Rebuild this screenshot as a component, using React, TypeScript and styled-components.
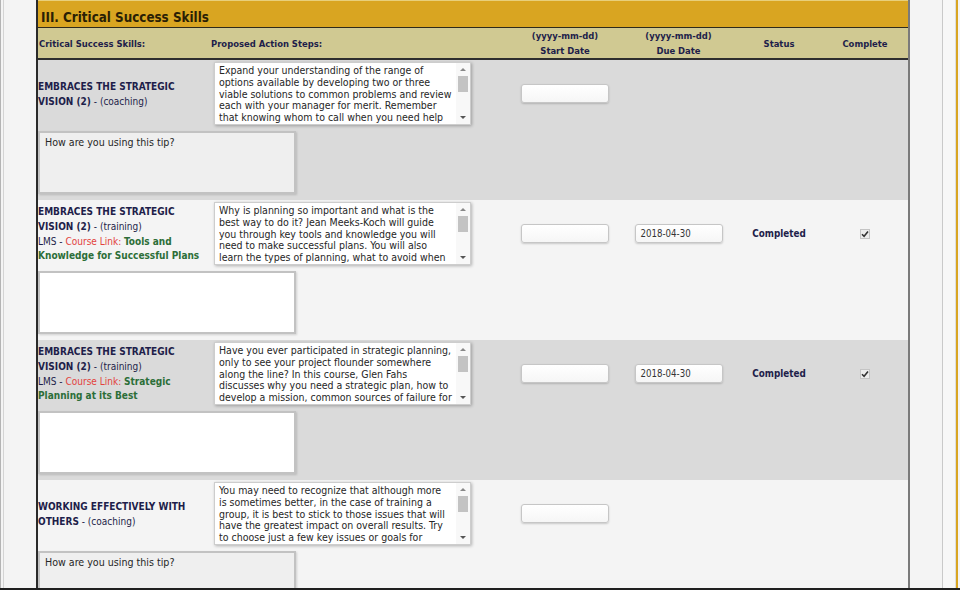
import React from "react";
import styled, { createGlobalStyle } from "styled-components";

const FONT = `"DejaVu Sans Condensed", "DejaVu Sans", Tahoma, sans-serif`;

const GlobalStyle = createGlobalStyle`
  html, body {
    margin: 0;
    padding: 0;
    background: #f4f4f4;
  }
  body {
    font-family: ${FONT};
    color: #1e1e4a;
  }
  * {
    box-sizing: border-box;
  }
`;

const COLUMNS = "172px 299px 112px 115px 86px 86px";

const Screen = styled.div`
  display: flex;
  width: 960px;
  height: 590px;
  overflow: hidden;
  border-bottom: 2px solid #1f1f1f;
  background: #f4f4f4;
`;

const LeftGutter = styled.div`
  flex: 0 0 36px;
  border-left: 1px solid #b4b4b4;
  box-shadow: inset 2px 0 0 #f4f4f4, inset 3px 0 0 #d4d4d4;
`;

const RightGutter = styled.div`
  display: flex;
  flex: 1;
`;

const GutterFill = styled.div`
  flex: 0 0 32px;
  background: #f4f4f4;
`;

const Rail = styled.div`
  flex: 0 0 14px;
  background: #f7f7f7;
  border-left: 1px solid #c9c9c9;
  border-right: 1px solid #dedede;
`;

const GoldEdge = styled.div`
  flex: 0 0 2px;
  background: #d9a521;
`;

const Panel = styled.div`
  flex: 0 0 874px;
  display: flex;
  flex-direction: column;
  border-left: 2px solid #2a2a2a;
  border-right: 2px solid #7a7a7a;
`;

const SectionTitle = styled.h2`
  flex: 0 0 28px;
  margin: 0;
  padding: 9px 0 0 3px;
  background: #d9a521;
  border-top: 1px solid #e8cf7a;
  border-bottom: 1px solid #2e2a1c;
  font-family: ${FONT};
  font-size: 13.3px;
  font-weight: bold;
  color: #2a1f05;
  line-height: 15px;
`;

const HeaderRow = styled.div`
  flex: 0 0 31px;
  display: grid;
  grid-template-columns: ${COLUMNS};
  align-items: center;
  background: #d0c992;
  border-bottom: 2px solid #2e2e2e;
`;

const HeaderCell = styled.div<{ $center?: boolean }>`
  font-size: 9.4px;
  font-weight: bold;
  line-height: 15px;
  color: #1e1e4a;
  text-align: ${(p) => (p.$center ? "center" : "left")};
  padding-left: ${(p) => (p.$center ? "0" : "1px")};
`;

const SkillRow = styled.div<{ $shaded: boolean }>`
  display: flex;
  flex-direction: column;
  flex: 0 0 140px;
  padding: 2px 0 6px;
  background: ${(p) => (p.$shaded ? "#dadada" : "#f4f4f4")};
`;

const TopLine = styled.div`
  display: grid;
  grid-template-columns: ${COLUMNS};
  align-items: center;
  height: 63px;
`;

const SkillCell = styled.div`
  font-size: 10px;
  line-height: 14.6px;
  color: #1e1e4a;
  padding: 2px 0 0 0;
`;

const SkillName = styled.span`
  font-weight: bold;
`;

const CourseLabel = styled.span`
  color: #e2433d;
`;

const CourseTitle = styled.span`
  color: #2c6e38;
  font-weight: bold;
`;

const ActionCell = styled.div`
  padding-left: 4px;
`;

const ActionBox = styled.div`
  display: flex;
  width: 257px;
  height: 63px;
  background: #fff;
  border: 1px solid #cdcdcd;
  box-shadow: 1px 1px 3px rgba(0, 0, 0, 0.28);
`;

const ActionText = styled.div`
  flex: 1;
  overflow: hidden;
  padding: 2px 0 0 4px;
  font-size: 10.5px;
  line-height: 11.8px;
  white-space: pre-line;
  color: #262626;
`;

const ScrollTrack = styled.div`
  flex: 0 0 14px;
  display: flex;
  flex-direction: column;
  align-items: center;
  padding: 3px 0 3px;
  background: #f8f8f8;
`;

const ScrollArrow = styled.div<{ $down?: boolean }>`
  width: 0;
  height: 0;
  margin: 2px 0;
  border-left: 3px solid transparent;
  border-right: 3px solid transparent;
  ${(p) => (p.$down ? "border-top: 3px solid #555;" : "border-bottom: 3px solid #888;")}
`;

const ScrollThumb = styled.div`
  width: 10px;
  height: 16px;
  margin-top: 3px;
  background: #c3c3c3;
`;

const ScrollSpacer = styled.div`
  flex: 1;
`;

const DateCell = styled.div`
  display: flex;
  justify-content: center;
`;

const DateInput = styled.div`
  width: 88px;
  height: 19px;
  padding: 3px 0 0 5px;
  border: 1px solid #c6c6c6;
  border-radius: 3px;
  background: linear-gradient(#ffffff, #f6f6f6);
  box-shadow: 0 1px 2px rgba(0, 0, 0, 0.18);
  font-size: 9.6px;
  line-height: 12px;
  color: #333;
`;

const StatusCell = styled.div`
  text-align: center;
  font-size: 9.8px;
  font-weight: bold;
  color: #1e1e4a;
`;

const CheckCell = styled.div`
  display: flex;
  justify-content: center;
`;

const CheckBox = styled.span`
  display: inline-flex;
  align-items: center;
  justify-content: center;
  width: 10px;
  height: 10px;
  border: 1px solid #c4c4c4;
  background: #ececec;
`;

const TipBox = styled.div<{ $filled: boolean }>`
  flex: 0 0 63px;
  width: 258px;
  margin-top: 6px;
  padding: 3px 5px;
  border: 2px solid #c2c2c2;
  box-shadow: 1px 1px 2px rgba(0, 0, 0, 0.15);
  background: ${(p) => (p.$filled ? "#efefef" : "#ffffff")};
  font-size: 10.6px;
  line-height: 12px;
  color: #262626;
`;

type Skill = {
  name: string;
  kind: "coaching" | "training";
  course?: string;
  action: string[];
  due?: string;
  completed?: boolean;
};

// action text is kept as the lines the text box wraps it into
const skills: Skill[] = [
  {
    name: "EMBRACES THE STRATEGIC VISION (2)",
    kind: "coaching",
    action: [
      "Expand your understanding of the range of",
      "options available by developing two or three",
      "viable solutions to common problems and review",
      "each with your manager for merit.  Remember",
      "that knowing whom to call when you need help",
      "is a valuable skill.",
    ],
  },
  {
    name: "EMBRACES THE STRATEGIC VISION (2)",
    kind: "training",
    course: "Tools and Knowledge for Successful Plans",
    action: [
      "Why is planning so important and what is the",
      "best way to do it? Jean Meeks-Koch will guide",
      "you through key tools and knowledge you will",
      "need to make successful plans. You will also",
      "learn the types of planning, what to avoid when",
      "planning.",
    ],
    due: "2018-04-30",
    completed: true,
  },
  {
    name: "EMBRACES THE STRATEGIC VISION (2)",
    kind: "training",
    course: "Strategic Planning at its Best",
    action: [
      "Have you ever participated in strategic planning,",
      "only to see your project flounder somewhere",
      "along the line? In this course, Glen Fahs",
      "discusses why you need a strategic plan, how to",
      "develop a mission, common sources of failure for",
      "plans.",
    ],
    due: "2018-04-30",
    completed: true,
  },
  {
    name: "WORKING EFFECTIVELY WITH OTHERS",
    kind: "coaching",
    action: [
      "You may need to recognize that although more",
      "is sometimes better, in the case of training a",
      "group, it is best to stick to those issues that will",
      "have the greatest impact on overall results.  Try",
      "to choose just a few key issues or goals for",
      "the group.",
    ],
  },
];

const Check = () => (
  <svg width="8" height="8" viewBox="0 0 8 8">
    <path d="M1 4.2 L3.1 6.3 L7 1.6" fill="none" stroke="#333" strokeWidth="1.6" />
  </svg>
);

const Scrollbar = () => (
  <ScrollTrack>
    <ScrollArrow />
    <ScrollThumb />
    <ScrollSpacer />
    <ScrollArrow $down />
  </ScrollTrack>
);

const SkillEntry = ({ skill, index }: { skill: Skill; index: number }) => {
  const coaching = skill.kind === "coaching";
  return (
    <SkillRow $shaded={index % 2 === 0}>
      <TopLine>
        <SkillCell>
          <SkillName>{skill.name}</SkillName> - ({skill.kind})
          {skill.course && (
            <>
              <br />
              LMS - <CourseLabel>Course Link:</CourseLabel> <CourseTitle>{skill.course}</CourseTitle>
            </>
          )}
        </SkillCell>
        <ActionCell>
          <ActionBox>
            <ActionText>{skill.action.join("\n")}</ActionText>
            <Scrollbar />
          </ActionBox>
        </ActionCell>
        <DateCell>
          <DateInput />
        </DateCell>
        <DateCell>{skill.due && <DateInput>{skill.due}</DateInput>}</DateCell>
        <StatusCell>{skill.completed && "Completed"}</StatusCell>
        <CheckCell>
          {skill.completed && (
            <CheckBox>
              <Check />
            </CheckBox>
          )}
        </CheckCell>
      </TopLine>
      <TipBox $filled={coaching}>{coaching && "How are you using this tip?"}</TipBox>
    </SkillRow>
  );
};

export default function App() {
  return (
    <Screen>
      <GlobalStyle />
      <LeftGutter />
      <Panel>
        <SectionTitle>III. Critical Success Skills</SectionTitle>
        <HeaderRow>
          <HeaderCell>Critical Success Skills:</HeaderCell>
          <HeaderCell>Proposed Action Steps:</HeaderCell>
          <HeaderCell $center>
            (yyyy-mm-dd)
            <br />
            Start Date
          </HeaderCell>
          <HeaderCell $center>
            (yyyy-mm-dd)
            <br />
            Due Date
          </HeaderCell>
          <HeaderCell $center>Status</HeaderCell>
          <HeaderCell $center>Complete</HeaderCell>
        </HeaderRow>
        {skills.map((s, i) => (
          <SkillEntry key={i} skill={s} index={i} />
        ))}
      </Panel>
      <RightGutter>
        <GutterFill />
        <Rail />
        <GoldEdge />
      </RightGutter>
    </Screen>
  );
}
